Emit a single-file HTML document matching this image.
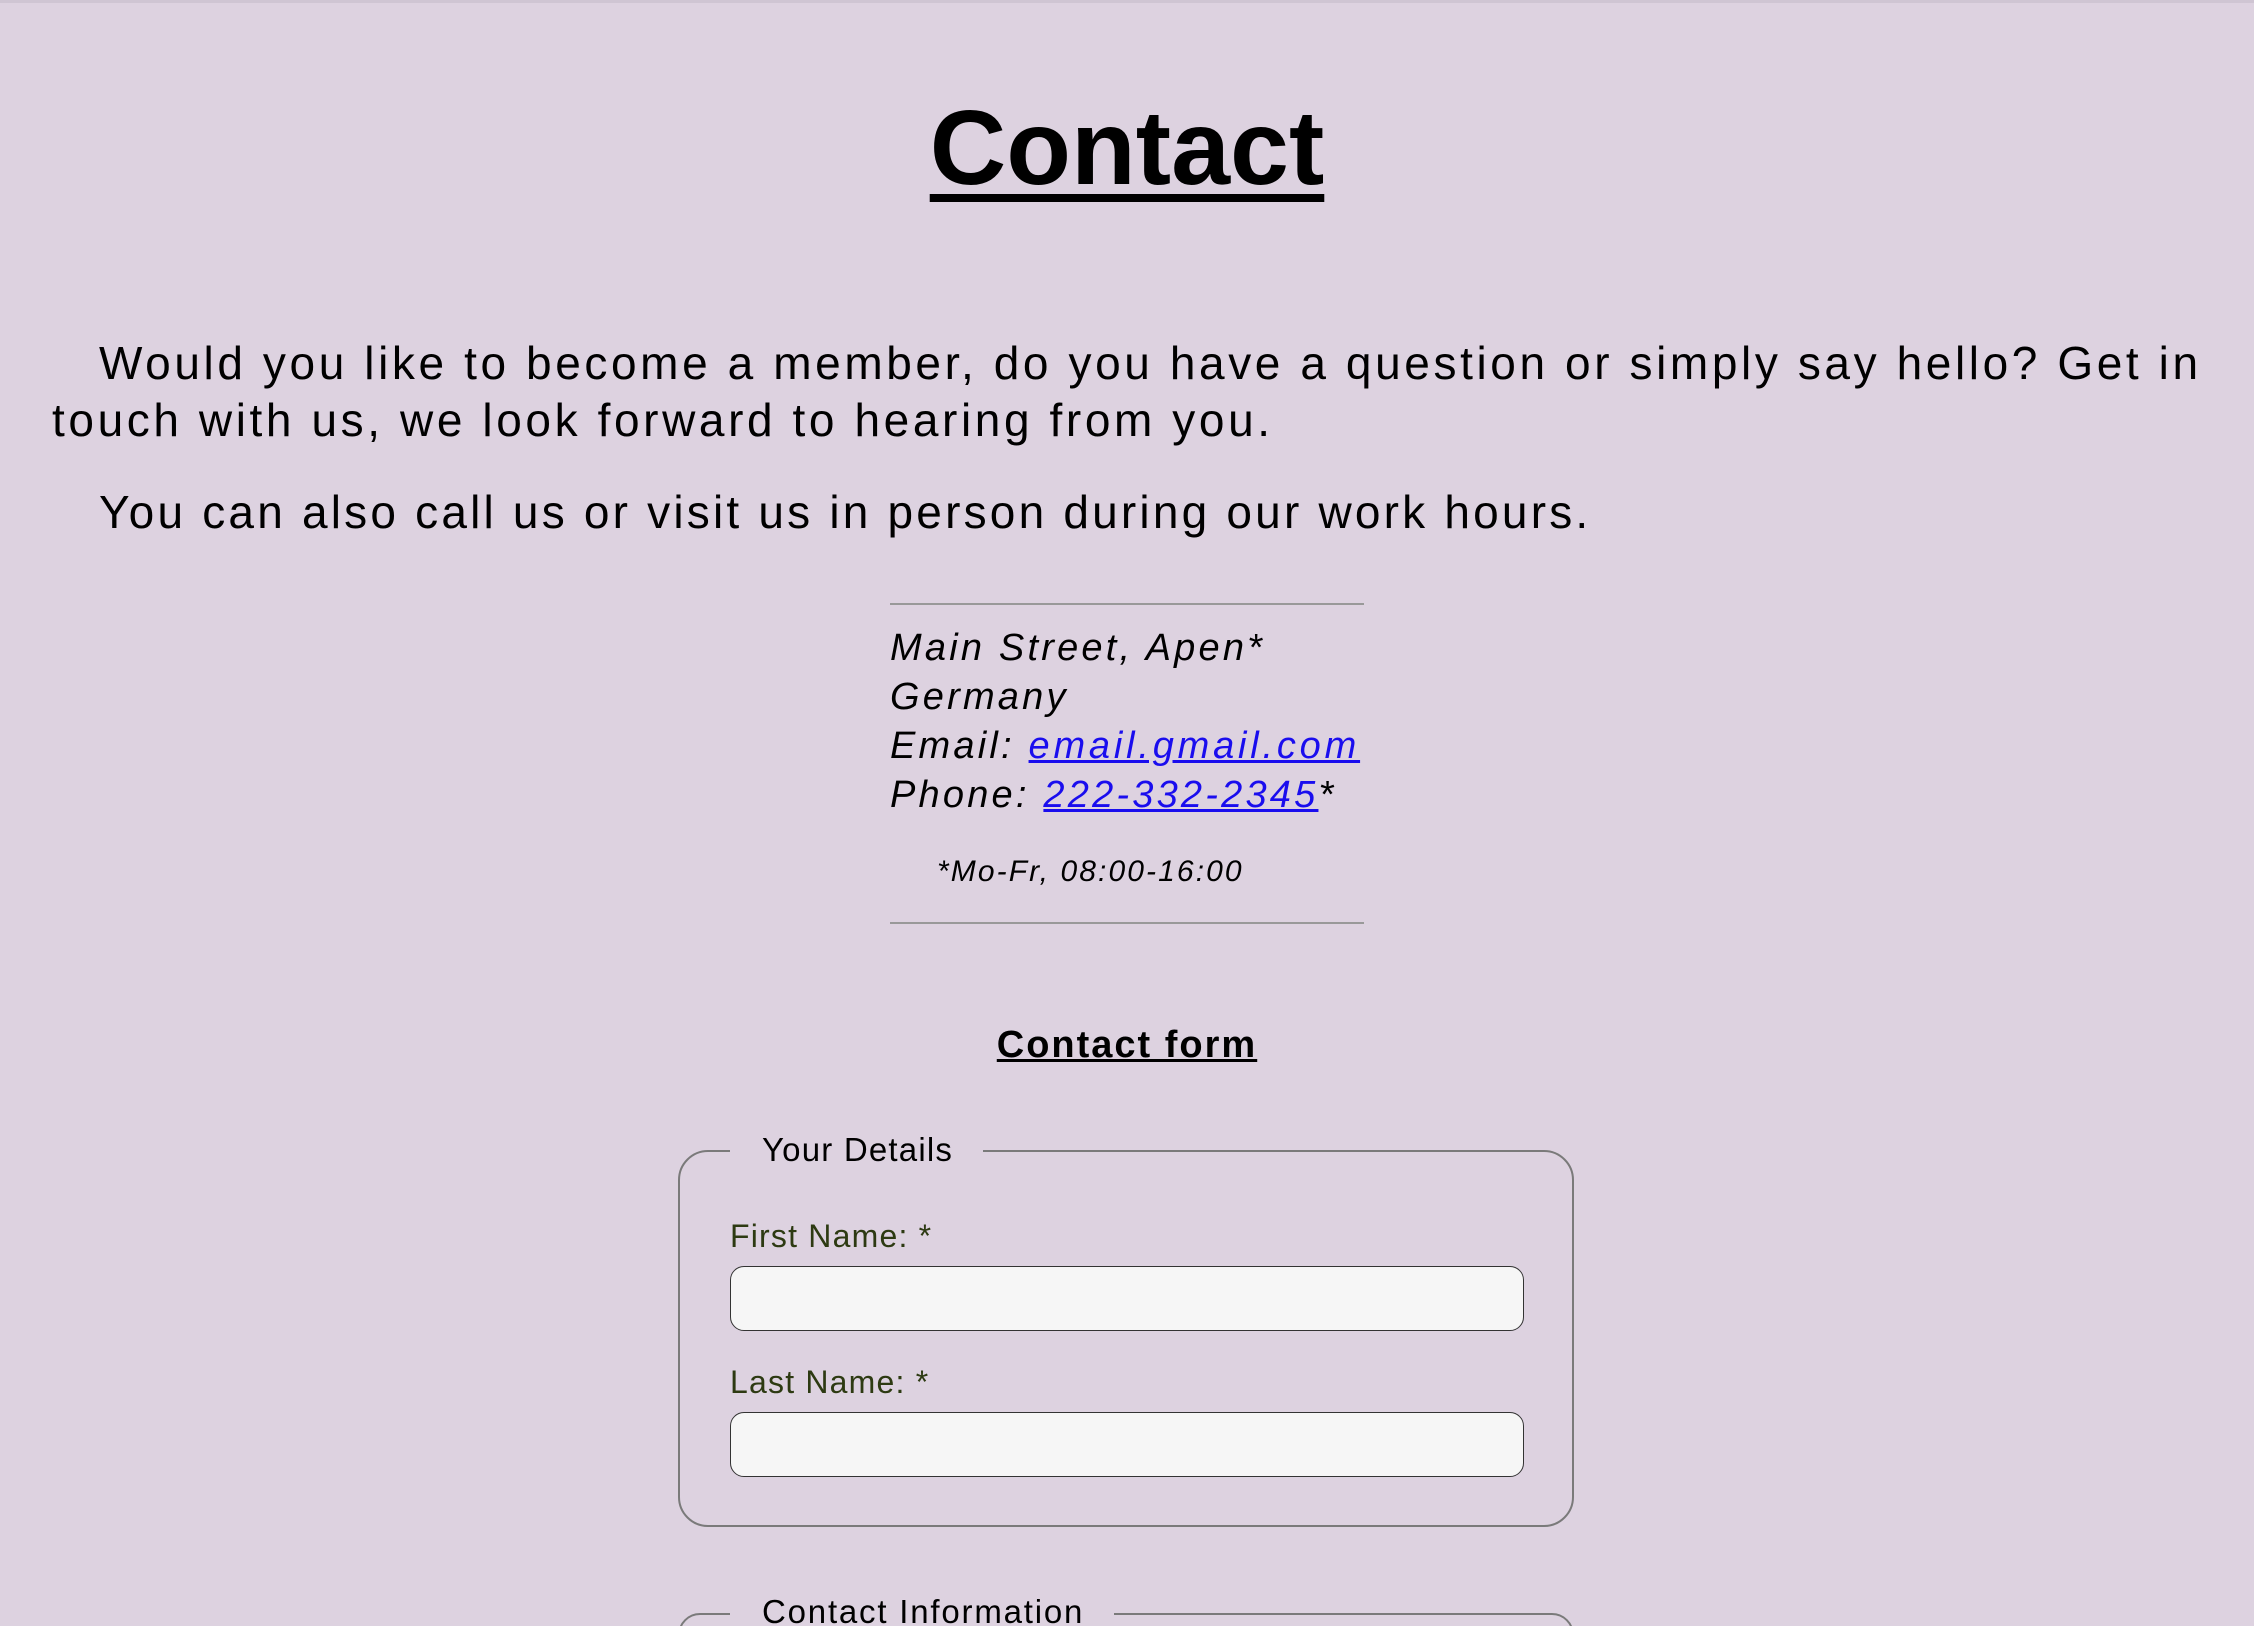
<!DOCTYPE html>
<html><head><meta charset="utf-8"><style>
html,body{margin:0;padding:0;width:2254px;height:1626px;overflow:hidden;}
body{background:#ddd2e0;position:relative;font-family:"Liberation Sans",sans-serif;color:#000;}
.a{position:absolute;white-space:nowrap;}
h1{position:absolute;margin:0;left:0;width:2254px;text-align:center;top:88px;font-size:106px;line-height:120px;font-weight:bold;text-decoration:underline;text-decoration-thickness:8px;text-underline-offset:10px;}
.p{font-size:46px;letter-spacing:3.6px;}
.addr{font-style:italic;font-size:38px;letter-spacing:3.2px;}
a{color:#1a0dee;text-decoration:underline;}
.hr{position:absolute;left:890px;width:474px;height:2px;background:#999;}
.fs{position:absolute;border:2px solid #7a7a7a;border-radius:30px;}
.leg{position:absolute;background:#ddd2e0;font-size:33px;padding:0 30px 0 32px;letter-spacing:1.2px;}
.lbl{position:absolute;font-size:32px;color:#2d3a12;letter-spacing:1.2px;}
.inp{position:absolute;left:730px;width:792px;height:63px;background:#f6f6f6;border:1.5px solid #333;border-radius:14px;}
</style></head><body>
<div style="position:absolute;left:0;top:0;width:2254px;height:3px;background:#cfc5d3"></div>
<h1>Contact</h1>
<div class="a p" style="left:99px;top:336px;">Would you like to become a member, do you have a question or simply say hello? Get in</div>
<div class="a p" style="left:52px;top:393px;">touch with us, we look forward to hearing from you.</div>
<div class="a p" style="left:99px;top:485px;letter-spacing:3.2px;">You can also call us or visit us in person during our work hours.</div>
<div class="hr" style="top:603px"></div>
<div class="a addr" style="left:890px;top:627px;">Main Street, Apen*</div>
<div class="a addr" style="left:890px;top:676px;">Germany</div>
<div class="a addr" style="left:890px;top:725px;">Email: <a style="letter-spacing:3.8px">email.gmail.com</a></div>
<div class="a addr" style="left:890px;top:774px;">Phone: <a>222-332-2345</a>*</div>
<div class="a" style="left:937px;top:855px;font-size:30px;font-style:italic;letter-spacing:2.1px;">*Mo-Fr, 08:00-16:00</div>
<div class="hr" style="top:922px"></div>
<div class="a" style="left:0;width:2254px;text-align:center;top:1024px;font-size:38px;font-weight:bold;text-decoration:underline;text-decoration-thickness:3px;letter-spacing:2px;">Contact form</div>
<div class="fs" style="left:678px;top:1150px;width:892px;height:373px;"></div>
<div class="leg" style="left:730px;top:1130px;line-height:40px;">Your Details</div>
<div class="lbl" style="left:730px;top:1218px;">First Name: *</div>
<div class="inp" style="top:1266px"></div>
<div class="lbl" style="left:730px;top:1364px;">Last Name: *</div>
<div class="inp" style="top:1412px"></div>
<div class="fs" style="left:678px;top:1613px;width:892px;height:40px;"></div>
<div class="leg" style="left:730px;top:1592px;line-height:40px;letter-spacing:1.8px;">Contact Information</div>
</body></html>
